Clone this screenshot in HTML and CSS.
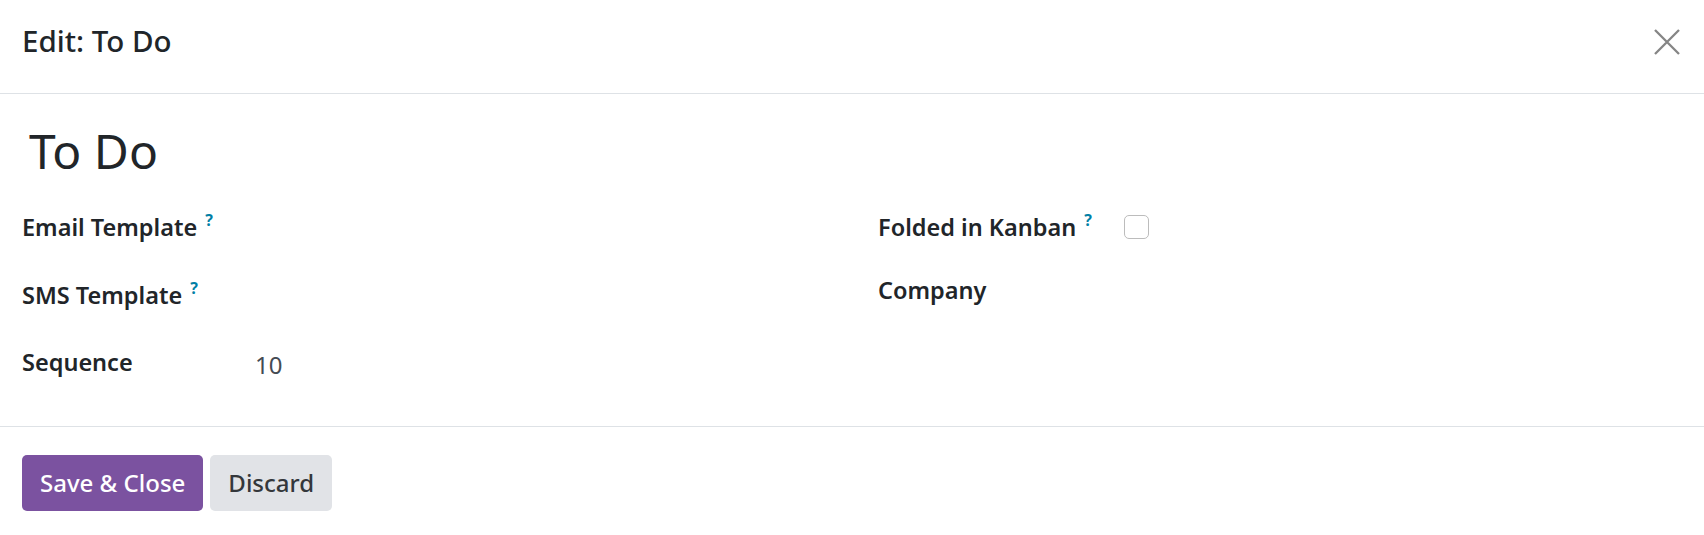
FILE: index.html
```html
<!DOCTYPE html>
<html lang="en">
<head>
<meta charset="utf-8">
<title>Edit: To Do</title>
<link rel="stylesheet" href="styles.css">
</head>
<body>
<div class="modal">
  <header class="modal-header">
    <h4 class="modal-title">Edit: To Do</h4>
    <button class="btn-close" aria-label="Close">
      <svg width="26" height="26" viewBox="0 0 26 26"><path d="M1 1 L25 25 M25 1 L1 25" stroke="#858585" stroke-width="2.3" fill="none"/></svg>
    </button>
  </header>
  <main class="modal-body">
    <h1 class="record-name">To Do</h1>
    <div class="groups">
      <div class="group group-left">
        <div class="field-row">
          <span class="label">Email Template<sup class="help">?</sup></span>
          <span class="value"></span>
        </div>
        <div class="field-row">
          <span class="label">SMS Template<sup class="help">?</sup></span>
          <span class="value"></span>
        </div>
        <div class="field-row">
          <span class="label">Sequence</span>
          <span class="value num">10</span>
        </div>
      </div>
      <div class="group group-right">
        <div class="field-row short">
          <span class="label">Folded in Kanban<sup class="help">?</sup></span>
          <span class="value"><span class="checkbox"></span></span>
        </div>
        <div class="field-row short">
          <span class="label">Company</span>
          <span class="value"></span>
        </div>
      </div>
    </div>
  </main>
  <footer class="modal-footer">
    <button class="btn btn-primary">Save &amp; Close</button>
    <button class="btn btn-secondary">Discard</button>
  </footer>
</div>
</body>
</html>
```
FILE: styles.css
```css
* { box-sizing: border-box; }
html, body { margin: 0; padding: 0; background: #fff; }
body {
  font-family: "Noto Sans", "Open Sans", sans-serif;
  color: #212529;
}
.modal { width: 1704px; }
.modal-header {
  height: 94px;
  border-bottom: 1px solid #dee2e6;
  display: flex;
  align-items: flex-start;
  justify-content: space-between;
  padding: 26px 24px 0 22px;
}
.modal-title {
  margin: 0;
  font-size: 29.5px;
  line-height: 30px;
  font-weight: 500;
}
.btn-close {
  border: 0;
  background: none;
  padding: 0;
  margin-top: 3px;
  width: 26px;
  height: 26px;
  display: block;
}
.btn-close svg { display: block; }
.modal-body {
  padding: 33px 22px 8px 22px;
  border-bottom: 1px solid #dee2e6;
}
.record-name {
  margin: 0 0 40px 0;
  padding-left: 7px;
  font-size: 48px;
  line-height: 48px;
  font-weight: 400;
}
.groups {
  display: grid;
  grid-template-columns: 856px 1fr;
}
.field-row {
  display: flex;
  align-items: flex-start;
  height: 67.5px;
}
.field-row.short { height: 63px; }
.label {
  font-size: 23.5px;
  line-height: 24px;
  font-weight: 600;
  white-space: nowrap;
}
.group-left .label { width: 233px; }
.group-right .label { width: 246px; }
.help {
  color: #0180a5;
  font-size: 16px;
  font-weight: 700;
  margin-left: 8px;
  vertical-align: 10px;
  line-height: 0;
}
.value { font-size: 24px; line-height: 24px; }
.num { color: #444b53; padding-top: 3px; }
.checkbox {
  display: block;
  width: 25px;
  height: 24px;
  border: 1.5px solid #bcbcbc;
  border-radius: 5px;
  background: #fff;
}
.modal-footer {
  padding: 28px 22px 0 22px;
  display: flex;
  gap: 7px;
}
.btn {
  height: 56px;
  border: 0;
  border-radius: 5px;
  font-family: "Noto Sans", "Open Sans", sans-serif;
  font-size: 24px;
  font-weight: 500;
  padding: 0 18px;
  line-height: 56px;
  white-space: nowrap;
}
.btn-primary { background: #7b52a0; color: #fff; }
.btn-secondary { background: #e1e3e7; color: #34373b; }
```
